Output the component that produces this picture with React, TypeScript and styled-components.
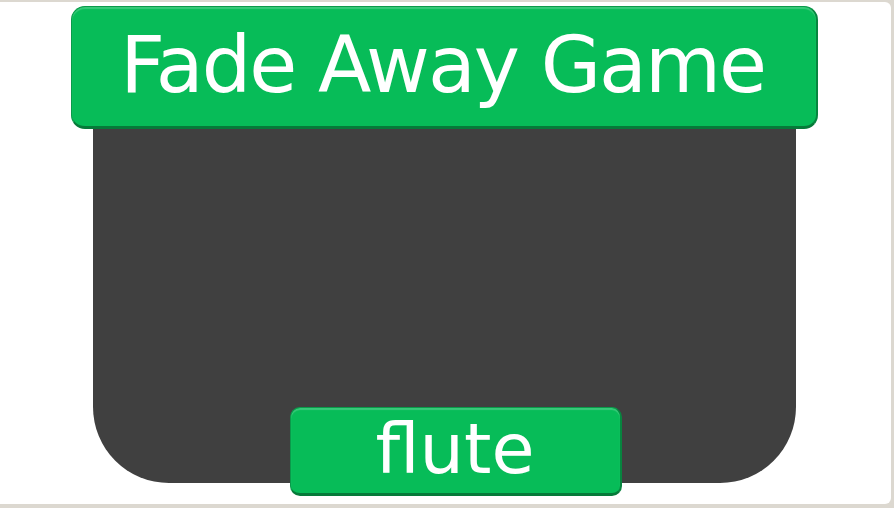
import { createGlobalStyle, styled } from "styled-components";

const GlobalStyle = createGlobalStyle`
  html, body {
    margin: 0;
    padding: 0;
    background: #dcd8d0;
    width: 894px;
    height: 508px;
    overflow: hidden;
  }
  #root {
    padding-top: 2px;
  }
`;

const Card = styled.div`
  width: 891px;
  height: 502px;
  background: #ffffff;
  border-radius: 0 6px 6px 0;
  display: flex;
  flex-direction: column;
  align-items: center;
  padding-top: 4px;
  box-sizing: border-box;
`;

const GreenButton = styled.div<{ $big?: boolean }>`
  box-sizing: border-box;
  background: #07bc58;
  border: 1px solid #0a9a4a;
  border-bottom: 3px solid #067a39;
  border-right: 2px solid #07853f;
  border-radius: ${(p) => (p.$big ? "14px" : "10px")};
  box-shadow: inset 0 2px 1px rgba(255, 255, 255, 0.2);
  color: #ffffff;
  font-family: "Comic Sans MS", "DejaVu Sans", sans-serif;
  display: flex;
  align-items: center;
  justify-content: center;
  position: relative;
  z-index: 1;
`;

const Header = styled(GreenButton)`
  width: 747px;
  height: 123px;
  margin-left: -3px;
  font-size: 78px;
  letter-spacing: -2px;
  padding-bottom: 4px;
  padding-right: 2px;
`;

const Panel = styled.div`
  width: 703px;
  height: 354px;
  margin-left: -2px;
  background: #404040;
  border-radius: 0 0 76px 76px;
  display: flex;
  flex-direction: column;
  align-items: center;
  justify-content: flex-end;
`;

const Word = styled(GreenButton)`
  width: 332px;
  height: 89px;
  margin-bottom: -13px;
  margin-left: 22px;
  font-size: 70px;
  padding-bottom: 4px;
`;

export default function App() {
  return (
    <>
      <GlobalStyle />
      <Card>
        <Header $big>Fade Away Game</Header>
        <Panel>
          <Word>flute</Word>
        </Panel>
      </Card>
    </>
  );
}
